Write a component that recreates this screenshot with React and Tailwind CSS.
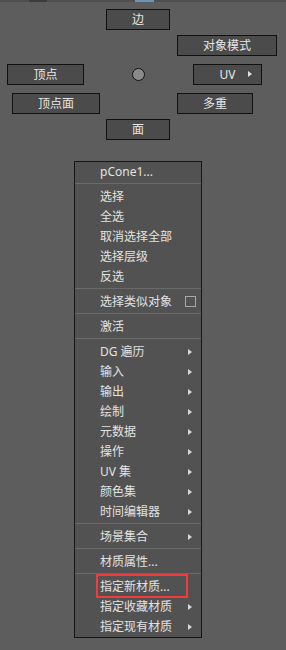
import React from 'react';

const font = { fontFamily: '"Noto Sans", "Noto Sans CJK SC", sans-serif' };

const Btn = ({ label, className = '', arrow = false }) => (
  <div
    className={`relative h-[21px] border border-[#111] bg-[#4b4b4b] text-[#e6e6e6] text-[12px] leading-[19px] flex items-center justify-center shrink-0 ${className}`}
  >
    {label}
    {arrow && (
      <span className="absolute right-[9px] top-[6px] w-0 h-0 border-y-[3.5px] border-y-transparent border-l-[4px] border-l-[#e0e0e0]" />
    )}
  </div>
);

const Arrow = () => (
  <span className="absolute left-[113px] top-[7px] w-0 h-0 border-y-[3.5px] border-y-transparent border-l-[4px] border-l-[#d8d8d8]" />
);

const Sep = () => (
  <div className="h-[5px] pt-[1px]">
    <div className="h-px bg-[#6a6a6a]" />
  </div>
);

const Item = ({ label, arrow, check, highlight }) => (
  <div className="relative h-[20px] pl-[25px] text-[12px] leading-[20px] text-[#e2e2e2] whitespace-nowrap">
    {label}
    {arrow && <Arrow />}
    {check && (
      <span className="absolute left-[110px] top-[4px] w-[11px] h-[11px] border border-[#a8a8a8]" />
    )}
    {highlight && (
      <span className="absolute left-[21px] top-[-3px] w-[92px] h-[24px] border-2 border-[#f23c3c]" />
    )}
  </div>
);

const groups = [
  [{ label: 'pCone1...' }],
  [
    { label: '选择' },
    { label: '全选' },
    { label: '取消选择全部' },
    { label: '选择层级' },
    { label: '反选' },
  ],
  [{ label: '选择类似对象', check: true }],
  [{ label: '激活' }],
  [
    { label: 'DG 遍历', arrow: true },
    { label: '输入', arrow: true },
    { label: '输出', arrow: true },
    { label: '绘制', arrow: true },
    { label: '元数据', arrow: true },
    { label: '操作', arrow: true },
    { label: 'UV 集', arrow: true },
    { label: '颜色集', arrow: true },
    { label: '时间编辑器', arrow: true },
  ],
  [{ label: '场景集合', arrow: true }],
  [{ label: '材质属性...' }],
  [
    { label: '指定新材质...', highlight: true },
    { label: '指定收藏材质', arrow: true },
    { label: '指定现有材质', arrow: true },
  ],
];

export default function App() {
  return (
    <div className="w-[286px] h-[650px] bg-[#5d5d5d] overflow-hidden" style={font}>
      <div className="relative h-[2px] bg-[#4f4f4f]">
        <div className="absolute left-[29px] top-0 w-[18px] h-[2px] bg-[#3c3c3c]" />
        <div className="absolute left-[135px] top-0 w-[19px] h-[2px] bg-[#6a95bb]" />
      </div>

      <div className="flex flex-col">
        <div className="flex mt-[7px]">
          <Btn label="边" className="ml-[106px] w-[64px]" />
        </div>
        <div className="flex mt-[5px]">
          <Btn label="对象模式" className="ml-[177px] w-[100px]" />
        </div>
        <div className="flex items-center mt-[8px]">
          <Btn label="顶点" className="ml-[7px] w-[77px]" />
          <div className="ml-[48px] w-[13px] h-[13px] rounded-full border border-[#111] bg-[#8a8a8a] shrink-0" />
          <Btn label="UV" arrow className="ml-[48px] w-[69px]" />
        </div>
        <div className="flex mt-[8px]">
          <Btn label="顶点面" className="ml-[12px] w-[88px]" />
          <Btn label="多重" className="ml-[77px] w-[76px]" />
        </div>
        <div className="flex mt-[5px]">
          <Btn label="面" className="ml-[106px] w-[64px]" />
        </div>
      </div>

      <div className="ml-[74px] mt-[21px] w-[128px] border border-[#161616] bg-[#525252]">
        {groups.map((g, gi) => (
          <div key={gi}>
            {gi > 0 && <Sep />}
            {g.map((it) => (
              <Item key={it.label} {...it} />
            ))}
          </div>
        ))}
      </div>
    </div>
  );
}
